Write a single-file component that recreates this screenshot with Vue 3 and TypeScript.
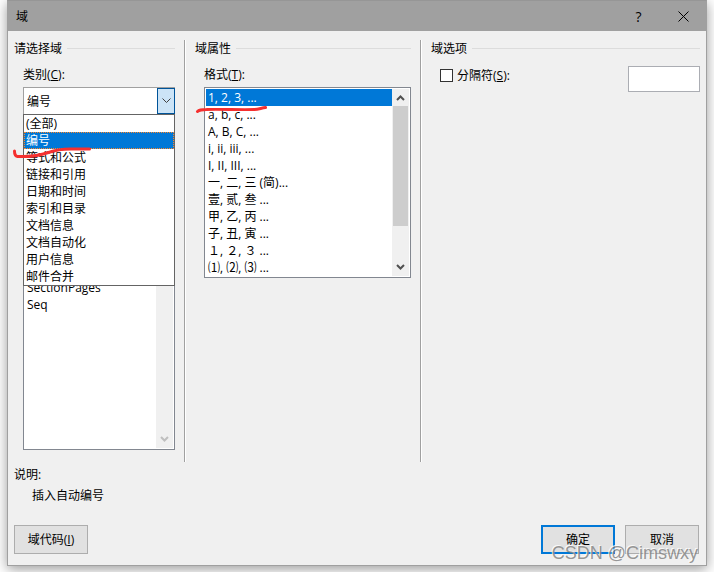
<script setup lang="ts">
import { ref } from 'vue'

const categories: string[] = [
  '(全部)', '编号', '等式和公式', '链接和引用', '日期和时间',
  '索引和目录', '文档信息', '文档自动化', '用户信息', '邮件合并',
]
const formats: string[] = [
  '1, 2, 3, ...', 'a, b, c, ...', 'A, B, C, ...', 'i, ii, iii, ...', 'I, II, III, ...',
  '一, 二, 三 (简)...', '壹, 贰, 叁 ...', '甲, 乙, 丙 ...', '子, 丑, 寅 ...',
  '１, ２, ３ ...', '⑴, ⑵, ⑶ ...',
]
const fieldNames: string[] = ['SectionPages', 'Seq']

const category = ref('编号')
const format = ref(formats[0])
const useSeparator = ref(false)
const separator = ref('')
</script>

<template>
  <main class="dialog">
    <header class="titlebar">
      <h1>域</h1>
      <button class="caption" type="button" aria-label="帮助">?</button>
      <button class="caption" type="button" aria-label="关闭">
        <svg width="11" height="11" viewBox="0 0 11 11"><path d="M.5.5l10 10M10.5.5l-10 10" /></svg>
      </button>
    </header>

    <div class="content">
      <div class="columns">
        <section class="column">
          <h2>请选择域</h2>
          <div class="group">
            <label class="caption-label" for="category">类别(<u>C</u>):</label>
            <div class="combo">
              <select id="category" v-model="category">
                <option v-for="c in categories" :key="c">{{ c }}</option>
              </select>
              <span class="combo-arrow">
                <svg width="9" height="6" viewBox="0 0 9 6"><path d="M.5.5l4 4 4-4" /></svg>
              </span>
              <ul class="popup" role="listbox" aria-labelledby="category">
                <li
                  v-for="c in categories"
                  :key="c"
                  role="option"
                  :aria-selected="c === category"
                  :class="{ active: c === category }"
                  @click="category = c"
                >{{ c }}</li>
              </ul>
            </div>
            <div class="listbox names">
              <ul role="listbox">
                <li v-for="n in fieldNames" :key="n" role="option">{{ n }}</li>
              </ul>
              <div class="scroll disabled">
                <svg width="9" height="6" viewBox="0 0 9 6"><path d="M1 1l3.5 3.5L8 1" /></svg>
              </div>
            </div>
          </div>
        </section>

        <section class="column">
          <h2>域属性</h2>
          <div class="group">
            <span id="format-label" class="caption-label">格式(<u>T</u>):</span>
            <div class="listbox">
              <ul role="listbox" aria-labelledby="format-label">
                <li
                  v-for="f in formats"
                  :key="f"
                  role="option"
                  :aria-selected="f === format"
                  :class="{ selected: f === format }"
                  @click="format = f"
                >{{ f }}</li>
              </ul>
              <div class="scroll">
                <svg width="9" height="6" viewBox="0 0 9 6"><path d="M1 5l3.5-3.5L8 5" /></svg>
                <span class="thumb"></span>
                <svg width="9" height="6" viewBox="0 0 9 6"><path d="M1 1l3.5 3.5L8 1" /></svg>
              </div>
            </div>
          </div>
        </section>

        <section class="column">
          <h2>域选项</h2>
          <div class="option">
            <input id="use-separator" v-model="useSeparator" type="checkbox" />
            <label for="use-separator">分隔符(<u>S</u>):</label>
            <input v-model="separator" class="text" type="text" aria-label="分隔符" />
          </div>
        </section>
      </div>

      <div class="description">
        <p>说明:</p>
        <p class="detail">插入自动编号</p>
      </div>

      <footer class="actions">
        <button class="push" type="button">域代码(<u>I</u>)</button>
        <button class="push primary" type="button">确定</button>
        <button class="push" type="button">取消</button>
      </footer>
    </div>

    <svg class="marks" width="300" height="180" viewBox="0 0 300 180">
      <path d="M14.500 151c0 3 .5 5 3 5.500 10 .5 22-1 31-4 7-2.500 14-3.500 22-3.500h19" />
      <path d="M197.500 111.500c2-2 5-2 9-2 14-.5 34 .5 48 0 4-.2 7-1.500 11-2" />
    </svg>
    <span class="watermark">CSDN @Cimswxy</span>
  </main>
</template>

<style>
body {
  margin: 0;
  padding-bottom: 7px;
  background: #fff;
}
</style>

<style scoped>
* {
  box-sizing: border-box;
}

.dialog {
  position: relative;
  margin: 0 7px;
  border: 1px solid #a0a0a0;
  border-top-color: #969696;
  background: #f0f0f0;
  box-shadow: 0 3px 12px rgba(0, 0, 0, 0.4);
  color: #000;
  font: 12px/17px "Open Sans", "Noto Sans CJK SC", sans-serif;
}

button,
input,
select {
  margin: 0;
  color: inherit;
  font: inherit;
}

h1,
h2,
p,
ul {
  margin: 0;
  padding: 0;
  font-size: 12px;
  font-weight: 400;
  list-style: none;
}

svg {
  display: block;
  fill: none;
  stroke: currentColor;
}

u {
  text-underline-offset: 1px;
}

.titlebar {
  display: flex;
  align-items: center;
  height: 30px;
  padding-left: 8px;
  background: #a0a0a0;
}

.titlebar h1 {
  flex: 1;
}

.caption {
  display: flex;
  align-items: center;
  justify-content: center;
  width: 45px;
  height: 30px;
  padding: 0;
  border: 0;
  background: none;
  font-size: 14px;
}

.content {
  padding: 9px 6px 11px;
}

.columns {
  display: grid;
  grid-template-columns: 172fr 236fr 278fr;
  min-height: 422px;
}

.column {
  min-width: 0;
  padding: 0 10px 0 9px;
  border-right: 1px solid #fff;
  box-shadow: inset -1px 0 #a0a0a0;
}

.column:first-child {
  padding-left: 0;
}

.column:last-child {
  padding-right: 0;
  border: 0;
  box-shadow: none;
}

h2 {
  display: flex;
  align-items: center;
  gap: 5px;
  white-space: nowrap;
}

h2::after {
  flex: 1;
  height: 1px;
  background: #dcdcdc;
  content: "";
}

.group {
  padding: 9px 0 0 9px;
}

.caption-label {
  display: block;
  margin-bottom: 4px;
}

.combo {
  position: relative;
}

.combo select {
  display: block;
  width: 100%;
  height: 28px;
  padding: 0 20px 0 3px;
  border: 1px solid #a0a0a0;
  border-radius: 0;
  outline: 0;
  appearance: none;
  background: #fff;
}

.combo-arrow {
  position: absolute;
  top: 1px;
  right: 0;
  display: flex;
  align-items: center;
  justify-content: center;
  width: 18px;
  height: 26px;
  border: 1px solid #005499;
  background: #cce4f7;
  color: #404040;
  pointer-events: none;
}

.popup {
  position: absolute;
  z-index: 1;
  top: 27px;
  left: 0;
  width: 100%;
  border: 1px solid #646464;
  background: #fff;
}

.popup li {
  height: 17px;
  padding: 0 2px;
}

.popup .active {
  outline: 1px dotted #ff8728;
  outline-offset: -1px;
  background: #0078d7;
  color: #fff;
}

.listbox {
  display: flex;
  padding: 1px;
  border: 1px solid #828790;
  background: #fff;
}

.listbox ul {
  flex: 1;
  min-width: 0;
}

.listbox li {
  height: 17px;
  padding: 0 2px;
  white-space: nowrap;
}

.listbox .selected {
  background: #0078d7;
  color: #fff;
}

.names {
  height: 335px;
}

.names ul {
  padding-top: 162px;
}

.scroll {
  display: flex;
  flex-direction: column;
  align-items: center;
  justify-content: space-between;
  width: 17px;
  padding: 6px 0;
  background: #f0f0f0;
  color: #505050;
}

.scroll svg {
  flex: none;
  stroke-width: 2;
}

.scroll.disabled {
  justify-content: flex-end;
  color: #bfbfbf;
}

.thumb {
  width: 15px;
  height: 120px;
  margin: 5px 0 auto;
  background: #cdcdcd;
}

.option {
  display: flex;
  align-items: flex-start;
  gap: 4px;
  padding: 9px 0 0 9px;
}

.option input[type="checkbox"] {
  width: 13px;
  height: 13px;
  margin-top: 3px;
  border: 1px solid #333;
  appearance: none;
  background: #fff;
}

.option input[type="checkbox"]:checked {
  background: #0078d7;
}

.option label {
  margin-top: 1px;
}

.option .text {
  width: 72px;
  height: 26px;
  margin-left: auto;
  padding: 0 4px;
  border: 1px solid #abadb3;
  border-radius: 0;
  background: #fff;
}

.description {
  padding-top: 4px;
}

.detail {
  padding: 4px 0 0 18px;
}

.actions {
  display: flex;
  gap: 10px;
  padding: 21px 1px 0 0;
}

.push {
  width: 74px;
  height: 29px;
  padding: 0;
  border: 1px solid #adadad;
  border-radius: 0;
  background: #e1e1e1;
}

.push:first-child {
  margin-right: auto;
}

.primary {
  border: 2px solid #0078d7;
}

.marks {
  position: absolute;
  z-index: 2;
  top: -1px;
  left: -8px;
  color: #f5302f;
  stroke-width: 3;
  stroke-linecap: round;
  stroke-linejoin: round;
  pointer-events: none;
}

.watermark {
  position: absolute;
  right: 8px;
  bottom: 2px;
  color: rgba(125, 125, 125, 0.8);
  font: 18px/20px "Liberation Sans", sans-serif;
  text-shadow: -1px -1px rgba(255, 255, 255, 0.8);
  pointer-events: none;
}
</style>
